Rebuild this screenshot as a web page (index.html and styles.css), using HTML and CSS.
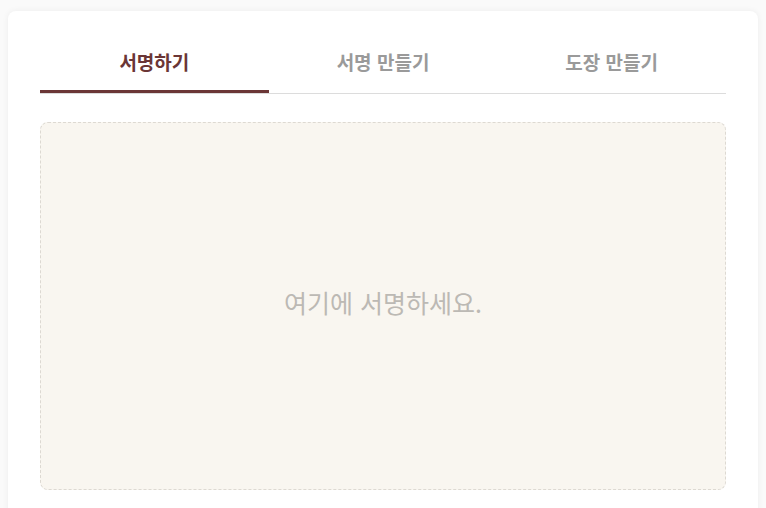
FILE: index.html
```html
<!DOCTYPE html>
<html lang="ko">
<head>
<meta charset="utf-8">
<link rel="stylesheet" href="styles.css">
</head>
<body>
<div class="card">
  <div class="tabs">
    <div class="tab active">서명하기</div>
    <div class="tab">서명 만들기</div>
    <div class="tab">도장 만들기</div>
  </div>
  <div class="pad">
    <span class="hint">여기에 서명하세요.</span>
  </div>
</div>
</body>
</html>
```
FILE: styles.css
```css
html, body {
  margin: 0;
  padding: 0;
}
body {
  background: #fafafa;
  font-family: "Noto Sans CJK KR", "Noto Sans", sans-serif;
  padding: 11px 8px 0 8px;
  height: 508px;
  box-sizing: border-box;
  overflow: hidden;
}
.card {
  background: #fff;
  border-radius: 8px;
  box-shadow: 0 0 6px rgba(0, 0, 0, 0.06);
  padding: 0 32px 40px;
}
.tabs {
  display: flex;
  border-bottom: 1px solid #dcdcdc;
}
.tab {
  flex: 1;
  text-align: center;
  padding: 37px 0 14px;
  line-height: 28px;
  font-size: 19px;
  font-weight: 700;
  color: #9a9a9a;
  border-bottom: 3px solid transparent;
}
.tab.active {
  color: #6b3636;
  border-bottom-color: #6b3636;
}
.pad {
  height: 366px;
  margin-top: 28px;
  background: #f9f6f0;
  border: 1px dashed #ddd9d2;
  border-radius: 8px;
  display: flex;
  align-items: center;
  justify-content: center;
}
.hint {
  font-size: 25px;
  color: #bcb9b4;
  margin-top: -8px;
}
```
